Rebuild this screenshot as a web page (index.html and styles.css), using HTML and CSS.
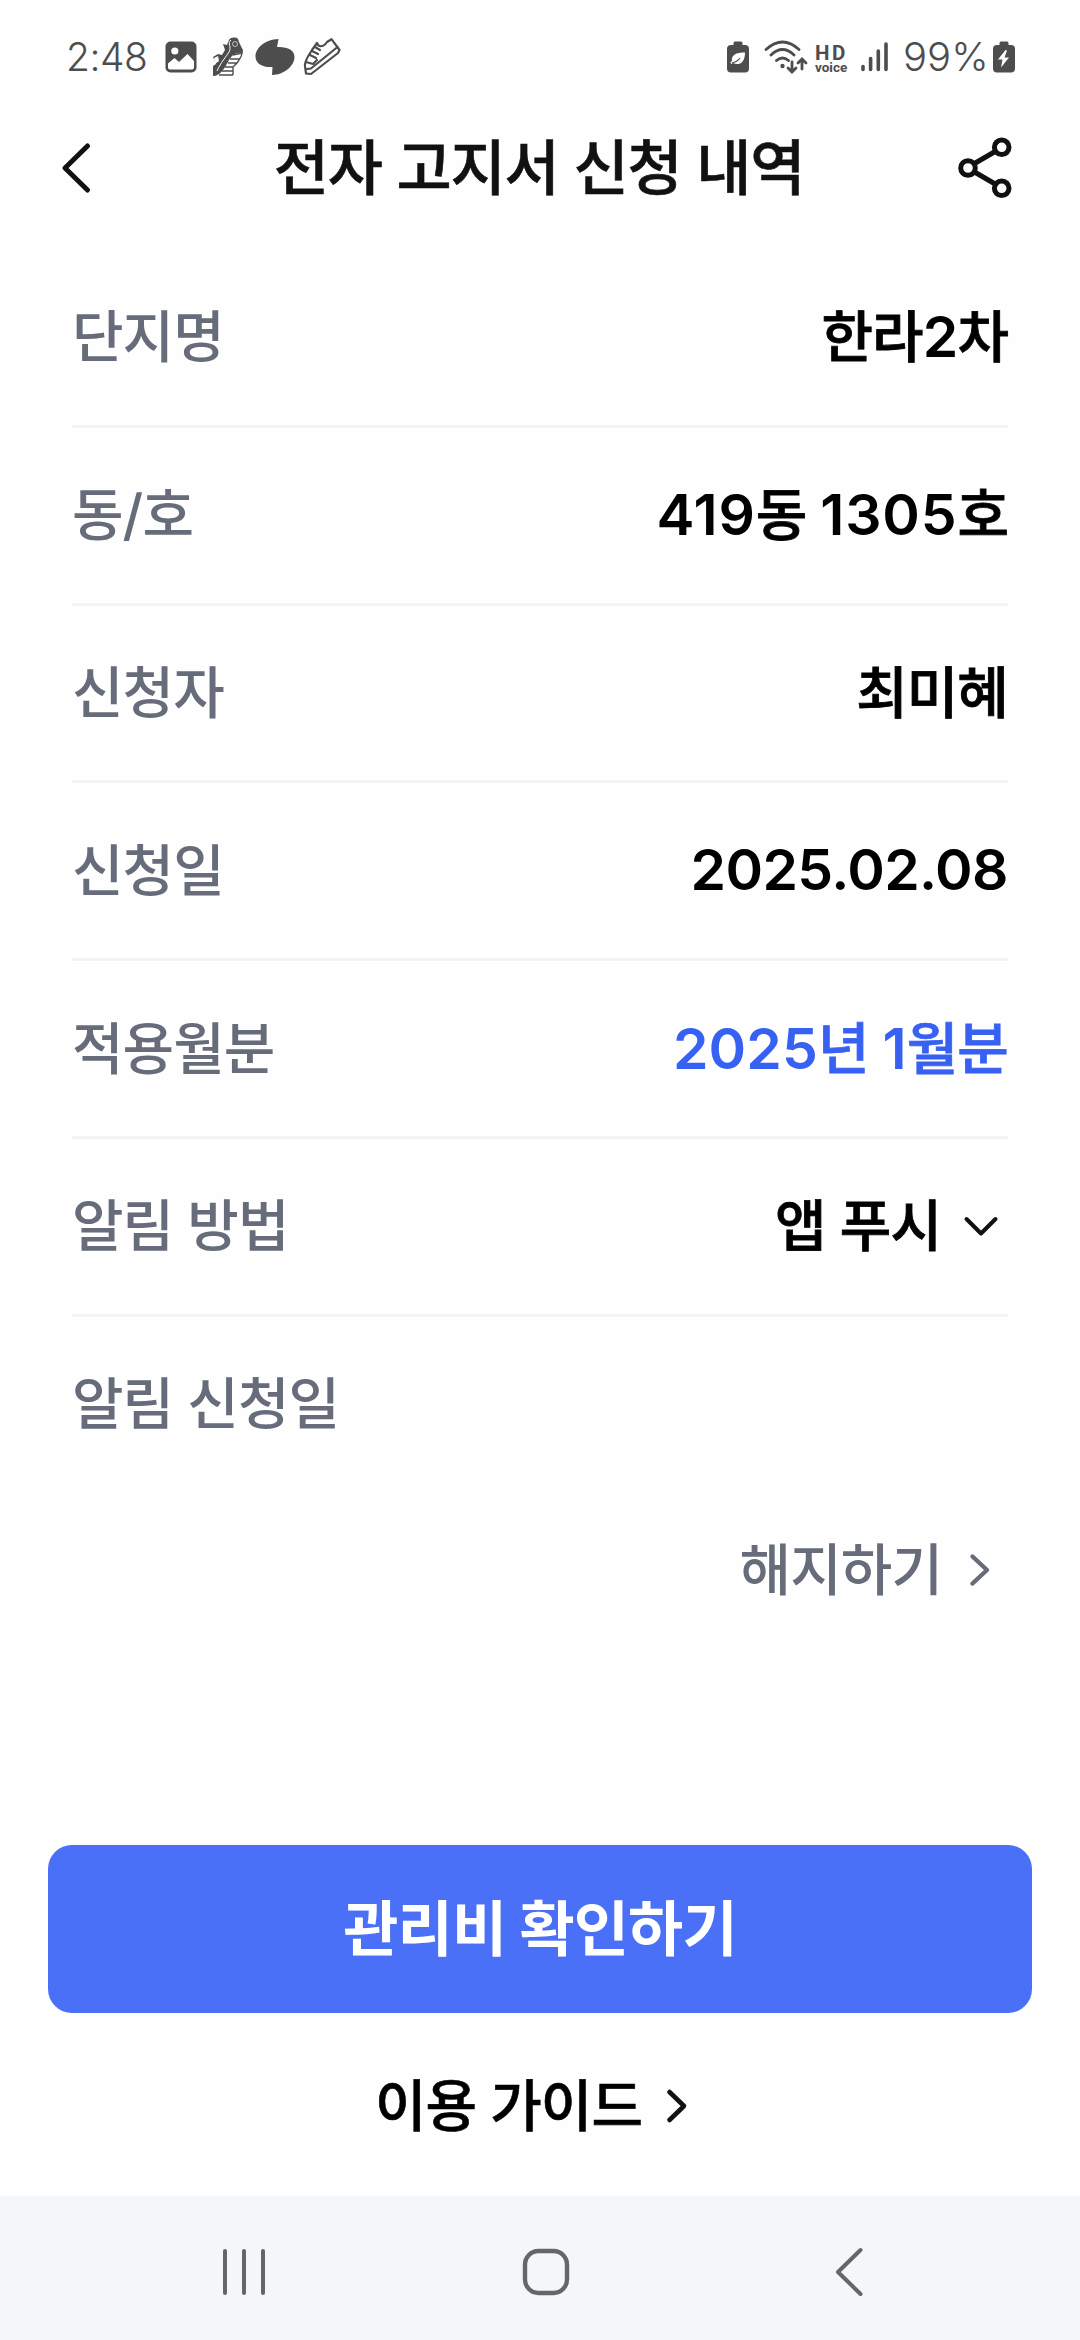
FILE: index.html
```html
<!DOCTYPE html>
<html lang="ko">
<head>
<meta charset="utf-8">
<meta name="viewport" content="width=device-width, initial-scale=1">
<title>전자 고지서 신청 내역</title>
<link rel="stylesheet" href="styles.css">
</head>
<body>
<div class="screen">
  <div class="status">
    <div class="status-left">
      <span class="clock">2:48</span>
      <svg class="i-photo" width="32" height="32" viewBox="0 0 32 32"><rect x=".5" y=".5" width="31" height="31" rx="5" fill="#4d4d4d"/><circle cx="9.800" cy="10" r="3.600" fill="#fff"/><path d="M3 22.500L9.500 17L14 21L22.500 13L29 20V26.500a2 2 0 0 1-2 2H5a2 2 0 0 1-2-2z" fill="#fff"/></svg>
      <svg class="i-step" width="32" height="40" viewBox="0 0 32 40"><path d="M17 3C19 0 24 0 26 2C27 6 29 9 31 13L30 16C23 15 19 19 16 25C12 32 8 39 1 39V29L4 27L1 20L6 17L10 18L13 13L11 7L15 8Z" fill="#4d4d4d"/><path d="M19 3c-4 3 1 7-2 12S9 25 5 34" fill="none" stroke="#fff" stroke-width="1"/><circle cx="23" cy="7" r="2.500" fill="none" stroke="#ddd" stroke-width=".8"/><path d="M2 21l4-2 1 5-4 3z" fill="#fff"/><path d="M21 18l9-2M18 22h10M16 26h9M13 30h8M10 34h11M7 38h14M30 14q1 4-5 12l-4 4v8" fill="none" stroke="#4d4d4d" stroke-width="1.400"/></svg>
      <svg class="i-blob" width="40" height="38" viewBox="0 0 40 38"><path d="M23.500 1C10 1.500 .5 10 .5 18.500C.5 26 8 29.500 17.500 29L17 37C30 36.500 39.500 27.500 39.500 19C39.500 12 32.500 8.500 22 9Z" fill="#4d4d4d"/></svg>
      <svg class="i-shoe" width="38" height="38" viewBox="0 0 38 38"><g fill="none" stroke="#4d4d4d" stroke-width="2.200" stroke-linejoin="round" stroke-linecap="round"><path d="M2 28C1 24 5 18 9 12L14 5C15 9 20 10 24 4L28.500 1.200L36.500 12L35 15L8 36L3 35.500Z"/><path d="M4 31l4-.5L34.500 9M3 24l7 2 4-4M9 13l6 3M12 9l5 3M7 17l6 3"/></g></svg>
    </div>
    <div class="status-right">
      <svg class="i-leaf" width="22" height="32" viewBox="0 0 22 32"><path d="M6.500 4V2a1.500 1.500 0 0 1 1.500-1.500h6A1.500 1.500 0 0 1 15.500 2v2H18a4 4 0 0 1 4 4v19.500a4 4 0 0 1-4 4H4a4 4 0 0 1-4-4V8a4 4 0 0 1 4-4z" fill="#4d4d4d"/><path d="M18 11.500C9 11.500 4 14 5 20l-1.500 1 .5 2 2-1c6 3 12 0 12-10.500z" fill="#fff"/><path d="M5 22q5-1 8-5" stroke="#4d4d4d" stroke-width="1.200" fill="none"/></svg>
      <svg class="i-wifi" width="44" height="34" viewBox="0 0 44 34"><g fill="none" stroke="#4d4d4d" stroke-width="2.800" stroke-linecap="round"><path d="M2 9.500Q18.500-5.500 35 9.500M7 15Q18.500 4 30 15M12.500 20.500Q18.500 15.500 24.500 20.500"/><path d="M28 22v9.500M24 28l4 4 4-4M38 29V19.500M34 23l4-4 4 4"/></g><circle cx="18.500" cy="26" r="2.200" fill="#4d4d4d"/></svg>
      <div class="hd"><span class="hd-top">HD</span><span class="hd-bottom">voice</span></div>
      <svg class="i-signal" width="27" height="30" viewBox="0 0 27 30"><path d="M2 24.500v3M9.600 16.500v11M17.300 9v18.500M25 2v25.500" stroke="#4d4d4d" stroke-width="3.600" stroke-linecap="round"/></svg>
      <span class="percent">99%</span>
      <svg class="i-charge" width="22" height="32" viewBox="0 0 22 32"><path d="M6.500 4V2a1.500 1.500 0 0 1 1.500-1.500h6A1.500 1.500 0 0 1 15.500 2v2H18a4 4 0 0 1 4 4v19.500a4 4 0 0 1-4 4H4a4 4 0 0 1-4-4V8a4 4 0 0 1 4-4z" fill="#4d4d4d"/><path d="M12.500 9L5 18.500h4.500L8 26.500l8-10h-4.500l2.500-7z" fill="#fff"/></svg>
    </div>
  </div>

  <header class="header">
    <svg class="back" width="32" height="54" viewBox="0 0 32 54"><path d="M27.500 5L5 27l22.500 22" fill="none" stroke="#111" stroke-width="5" stroke-linecap="round" stroke-linejoin="round"/></svg>
    <h1 class="title">전자 고지서 신청 내역</h1>
    <svg class="share" width="54" height="62" viewBox="0 0 54 62"><g fill="none" stroke="#111" stroke-width="5"><path d="M16.500 26.500L38 14M16.500 35L38 47.500"/><circle cx="10" cy="31" r="7.300"/><circle cx="43.700" cy="10.300" r="7.300"/><circle cx="43.700" cy="51.300" r="7.300"/></g></svg>
  </header>

  <dl class="details">
    <div class="row"><dt>단지명</dt><dd>한라<span class="num">2</span>차</dd></div>
    <div class="row"><dt>동/호</dt><dd><span class="num unit">419</span>동 <span class="num unit">1305</span>호</dd></div>
    <div class="row"><dt>신청자</dt><dd>최미혜</dd></div>
    <div class="row"><dt>신청일</dt><dd><span class="num date">2025.02.08</span></dd></div>
    <div class="row"><dt>적용월분</dt><dd class="accent"><span class="num month">2025</span>년 <span class="num month">1</span>월분</dd></div>
    <div class="row"><dt>알림 방법</dt><dd class="select">앱 푸시<svg class="down" width="36" height="24" viewBox="0 0 36 24"><path d="M3.500 5L18 19.500 32.500 5" fill="none" stroke="#111" stroke-width="4" stroke-linecap="round" stroke-linejoin="round"/></svg></dd></div>
    <div class="row last"><dt>알림 신청일</dt></div>
  </dl>

  <div class="cancel"><span>해지하기</span><svg width="24" height="36" viewBox="0 0 24 36"><path d="M4.500 4.500L19 18 4.500 31.500" fill="none" stroke="#666c7a" stroke-width="4.400" stroke-linecap="round" stroke-linejoin="round"/></svg></div>

  <button class="primary">관리비 확인하기</button>
  <div class="guide"><span>이용 가이드</span><svg width="24" height="36" viewBox="0 0 24 36"><path d="M4.500 4L19 18 4.500 32" fill="none" stroke="#111" stroke-width="4.600" stroke-linecap="round" stroke-linejoin="round"/></svg></div>

  <nav class="navbar">
    <svg class="recents" width="44" height="50" viewBox="0 0 44 50"><path d="M3 4v42M22 4v42M41 4v42" stroke="#646669" stroke-width="4" stroke-linecap="round"/></svg>
    <svg class="home" width="48" height="48" viewBox="0 0 48 48"><rect x="3" y="3" width="42" height="42" rx="13.500" fill="none" stroke="#646669" stroke-width="4.400"/></svg>
    <svg class="nav-back" width="30" height="50" viewBox="0 0 30 50"><path d="M26.500 3L4 25l22.500 22" fill="none" stroke="#646669" stroke-width="4" stroke-linecap="round" stroke-linejoin="round"/></svg>
  </nav>
</div>
</body>
</html>
```
FILE: styles.css
```css
* { box-sizing: border-box; }

body {
  margin: 0;
  background: #fefefe;
  font-family: Inter, "Noto Sans CJK KR", sans-serif;
  color: #000;
}

.screen {
  display: flex;
  flex-direction: column;
  width: 1080px;
  height: 2340px;
  overflow: hidden;
}

svg { display: block; flex: none; }

/* Status bar */
.status {
  display: flex;
  align-items: center;
  justify-content: space-between;
  height: 110px;
  padding: 3px 65px 0 66px;
  color: #4d4d4d;
}

.status-left,
.status-right {
  display: flex;
  align-items: center;
}

.clock,
.percent {
  font-size: 39px;
  font-weight: 300;
  line-height: 48px;
  letter-spacing: -0.5px;
}

.clock { width: 99px; }

.percent {
  width: 90px;
  font-size: 40px;
  letter-spacing: 0;
}

.i-step { margin-left: 15px; }
.i-blob { margin-left: 11px; }
.i-shoe { margin-left: 8px; }
.i-wifi { margin-left: 15px; }
.i-signal { margin-left: 13px; margin-right: 15px; }

.hd {
  display: flex;
  flex-direction: column;
  width: 33px;
  margin-left: 7px;
  padding-top: 5px;
  font-family: Roboto, sans-serif;
  font-weight: 700;
}

.hd-top {
  font-size: 20.5px;
  line-height: 16px;
  letter-spacing: 2.5px;
}

.hd-bottom {
  font-size: 13.5px;
  line-height: 12px;
}

/* Page header */
.header {
  display: flex;
  align-items: center;
  justify-content: space-between;
  height: 116px;
  padding: 0 68px 0 60px;
  color: #111;
}

.title {
  margin: 0 0 0 28px;
  font-size: 60px;
  font-weight: 500;
  line-height: 80px;
  letter-spacing: -1.2px;
  -webkit-text-stroke: 0.6px currentColor;
}

/* Application details */
.details {
  margin: 24px 72px 0;
}

.row {
  display: flex;
  align-items: center;
  justify-content: space-between;
  height: 177.8px;
  border-bottom: 3px solid #f2f3f4;
  font-size: 56px;
  line-height: 80px;
  letter-spacing: -0.9px;
}

.row.last {
  height: 172px;
  padding-top: 2px;
  border-bottom: 0;
}

dt {
  color: #666c7a;
  font-weight: 500;
}

dd {
  margin: 0;
  font-weight: 500;
  -webkit-text-stroke: 0.8px currentColor;
}

.num {
  font-size: 57px;
  font-weight: 600;
  line-height: 78px;
  -webkit-text-stroke: 0;
}

.unit { letter-spacing: 0.8px; }
.month { letter-spacing: 0.1px; }

.date {
  display: block;
  padding-bottom: 2px;
  letter-spacing: -0.6px;
}

.accent { color: #3761f3; }

.select {
  display: flex;
  align-items: center;
  gap: 22px;
  padding-right: 9px;
}

.cancel {
  display: flex;
  align-items: center;
  justify-content: flex-end;
  gap: 26px;
  height: 162px;
  padding-right: 88px;
  color: #666c7a;
  font-size: 56px;
  font-weight: 500;
  line-height: 80px;
  letter-spacing: -0.9px;
}

/* Footer actions */
.primary {
  height: 168px;
  margin: 194px 48px 0;
  padding: 0;
  border: 0;
  border-radius: 24px;
  background: #4a70f7;
  color: #fff;
  font-family: inherit;
  font-size: 60px;
  font-weight: 700;
  line-height: 80px;
  letter-spacing: -0.9px;
}

.guide {
  display: flex;
  align-items: center;
  justify-content: center;
  gap: 23px;
  height: 183px;
  padding: 3px 16px 0 0;
  font-size: 56px;
  font-weight: 500;
  line-height: 80px;
  letter-spacing: -0.9px;
}

.guide span { -webkit-text-stroke: 0.6px currentColor; }

/* System navigation */
.navbar {
  display: flex;
  align-items: center;
  height: 144px;
  padding: 8px 0 0 222px;
  background: #f5f6f8;
}

.home { margin-left: 256px; }
.nav-back { margin-left: 264px; }
```
